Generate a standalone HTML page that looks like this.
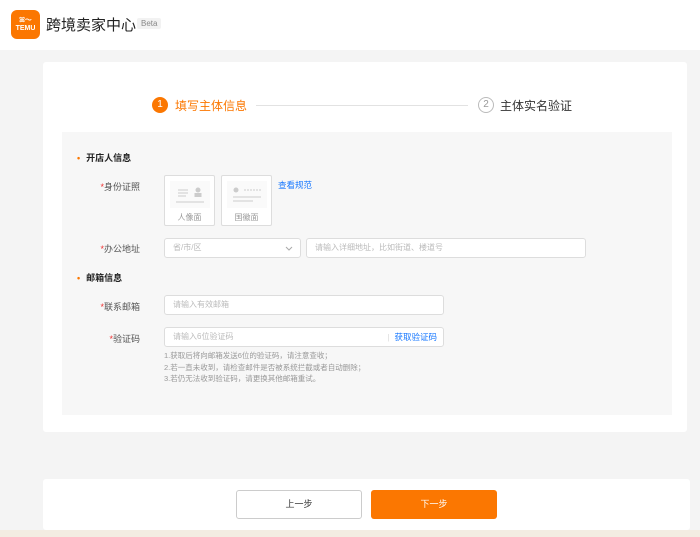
<!DOCTYPE html>
<html><head><meta charset="utf-8"><style>
*{margin:0;padding:0;box-sizing:border-box}
body{width:700px;height:537px;overflow:hidden;background:#f4f4f4;font-family:"Liberation Sans","Noto Sans CJK SC",sans-serif;position:relative;color:#333}
.a{position:absolute}
.hdr{left:0;top:0;width:700px;height:50px;background:#fff}
.logo{left:11px;top:10px;width:29px;height:29px;border-radius:6px;background:#fb7701;color:#fff;font-size:7px;font-weight:bold;text-align:center;line-height:8px;padding-top:7px}
.title{left:46px;top:14px;font-size:15px;color:#222}
.beta{left:137px;top:18px;font-size:8px;color:#888;background:#f2f2f2;padding:1px 4px;border-radius:2px}
.card{left:43px;top:62px;width:644px;height:370px;background:#fff;border-radius:3px}
.panel{left:62px;top:132px;width:610px;height:283px;background:#f7f7f7}
.c1{left:152px;top:97px;width:16px;height:16px;border-radius:50%;background:#fb7701;color:#fff;font-size:10px;text-align:center;line-height:16px}
.c2{left:478px;top:97px;width:16px;height:16px;border-radius:50%;border:1px solid #bbb;color:#999;font-size:10px;text-align:center;line-height:14px}
.s1{left:175px;top:97px;font-size:12px;color:#fb7701}
.s2{left:500px;top:97px;font-size:12px;color:#333}
.line{left:256px;top:105px;width:212px;height:1px;background:#e2e2e2}
.sec{font-size:9px;font-weight:bold;color:#222}
.dot{color:#fb7701;margin-right:6px}
.lab{font-size:9px;color:#555;text-align:right;width:60px}
.lab b{color:#e33;font-weight:normal}
.box{background:#fff;border:1px solid #ddd;border-radius:3px;font-size:8px;color:#bbb;padding-left:8px;line-height:18px}
.up{width:51px;height:51px;background:#fff;border:1px solid #ddd;border-radius:2px;font-size:8px;color:#999;text-align:center}
.up svg{display:block;margin:5px auto 0}
.tip{left:164px;top:350px;font-size:7.5px;color:#999;line-height:11.5px}
.bcard{left:43px;top:479px;width:647px;height:51px;background:#fff;border-radius:3px}
.btn1{left:236px;top:490px;width:126px;height:29px;border:1px solid #ccc;border-radius:3px;background:#fff;font-size:9px;text-align:center;line-height:27px}
.btn2{left:371px;top:490px;width:126px;height:29px;border-radius:3px;background:#fb7701;color:#fff;font-size:9px;text-align:center;line-height:29px}
.strip{left:0;top:530px;width:700px;height:7px;background:#f3ece2}
</style></head><body>
<div class="a hdr"></div>
<div class="a logo">ꕤ〜<br>TEMU</div>
<div class="a title">跨境卖家中心</div>
<div class="a beta">Beta</div>
<div class="a card"></div>
<div class="a c1">1</div><div class="a s1">填写主体信息</div>
<div class="a line"></div>
<div class="a c2">2</div><div class="a s2">主体实名验证</div>
<div class="a panel"></div>
<div class="a sec" style="left:77px;top:151px"><span class="dot">•</span>开店人信息</div>
<div class="a lab" style="left:80px;top:180px"><b>*</b>身份证照</div>
<div class="a up" style="left:164px;top:175px"><svg width="40" height="27"><rect width="40" height="27" fill="#fafafa"/><g stroke="#ccc" stroke-width="1"><line x1="8" y1="9" x2="18" y2="9"/><line x1="8" y1="12" x2="18" y2="12"/><line x1="8" y1="15" x2="16" y2="15"/><line x1="6" y1="21" x2="34" y2="21"/></g><circle cx="28" cy="9" r="2.5" fill="#ccc"/><rect x="24.5" y="12" width="7" height="4" fill="#ccc"/></svg><div style="margin-top:4px">人像面</div></div>
<div class="a up" style="left:221px;top:175px"><svg width="40" height="27"><rect width="40" height="27" fill="#fafafa"/><circle cx="9" cy="9" r="2.5" fill="#ccc"/><g stroke="#ccc" stroke-width="1"><line x1="17" y1="9" x2="34" y2="9" stroke-dasharray="2 1"/><line x1="6" y1="16" x2="34" y2="16"/><line x1="6" y1="20" x2="26" y2="20"/></g></svg><div style="margin-top:4px">国徽面</div></div>
<div class="a" style="left:278px;top:179px;font-size:8.5px;color:#1677ff">查看规范</div>
<div class="a lab" style="left:80px;top:242px"><b>*</b>办公地址</div>
<div class="a box" style="left:164px;top:238px;width:137px;height:20px">省/市/区<svg style="position:absolute;right:7px;top:7px" width="8" height="5"><path d="M1 1l3 3 3-3" stroke="#aaa" fill="none"/></svg></div>
<div class="a box" style="left:306px;top:238px;width:280px;height:20px">请输入详细地址，比如街道、楼道号</div>
<div class="a sec" style="left:77px;top:271px"><span class="dot">•</span>邮箱信息</div>
<div class="a lab" style="left:80px;top:300px"><b>*</b>联系邮箱</div>
<div class="a box" style="left:164px;top:295px;width:280px;height:20px">请输入有效邮箱</div>
<div class="a lab" style="left:80px;top:332px"><b>*</b>验证码</div>
<div class="a box" style="left:164px;top:327px;width:280px;height:20px">请输入6位验证码<span style="float:right;margin-right:6px;color:#1677ff;font-size:8.5px"><span style="color:#ddd">|&nbsp;&nbsp;</span>获取验证码</span></div>
<div class="a tip">1.获取后将向邮箱发送6位的验证码，请注意查收；<br>2.若一直未收到，请检查邮件是否被系统拦截或者自动删除；<br>3.若仍无法收到验证码，请更换其他邮箱重试。</div>
<div class="a bcard"></div>
<div class="a btn1">上一步</div>
<div class="a btn2">下一步</div>
<div class="a strip"></div>
</body></html>
